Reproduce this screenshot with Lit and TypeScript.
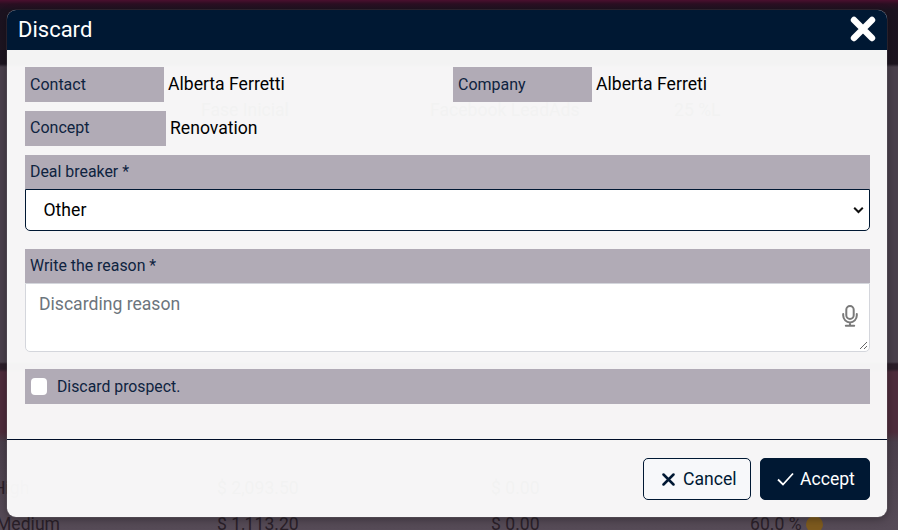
import { LitElement, html, css } from "lit";
import { customElement } from "lit/decorators.js";

@customElement("app-root")
export class AppRoot extends LitElement {
  static styles = css`
    :host {
      display: block;
      position: relative;
      width: 898px;
      height: 530px;
      overflow: hidden;
      font-family: Roboto, "Liberation Sans", sans-serif;
      background: #4d424e;
    }
    * { box-sizing: border-box; }
    .backdrop {
      position: absolute;
      inset: 0;
      background: linear-gradient(#4a0f2e 0, #2a0f22 4px, #1c1320 10px, #1d1520 64px, #4a404c 67px, #4a404c 362px, #2c1e2a 364px, #2c1e2a 369px, #4e2c3c 372px, #4e2c3c 432px, #4a3f4b 442px, #564b57 100%);
    }
    .ghost {
      position: absolute;
      font-size: 17.6px;
      color: #2a2029;
      white-space: nowrap;
    }
    .ghost.behind { color: #000; }
    .dot {
      position: absolute;
      left: 806px;
      top: 516px;
      width: 17px;
      height: 17px;
      border-radius: 50%;
      background: #7d5a1e;
    }
    .modal {
      position: absolute;
      left: 7px;
      top: 10px;
      width: 880px;
      height: 507px;
      border-radius: 9px;
      overflow: hidden;
      background: rgba(255, 255, 255, 0.95);
      display: flex;
      flex-direction: column;
      box-shadow: 0 0 0 0.5px rgba(255, 255, 255, 0.15), 0 2px 8px rgba(0, 0, 0, 0.35);
    }
    .header {
      height: 40px;
      flex: none;
      background: #001833;
      color: #fff;
      display: flex;
      align-items: center;
      justify-content: space-between;
      padding: 0 0 0 11px;
    }
    .title { font-size: 22px; line-height: 40px; }
    .close {
      width: 26px;
      height: 26px;
      margin-right: 11px;
      margin-top: -2px;
      display: block;
    }
    .body {
      height: 390px;
      flex: none;
      padding: 17px 17px 0 18px;
      display: flex;
      flex-direction: column;
      border-bottom: 1px solid #000d28;
    }
    .info { display: flex; height: 35px; margin-bottom: 9px; }
    .pair { display: flex; }
    .pair.first { width: 428px; }
    .tag {
      background: #b1abb6;
      color: #0e2340;
      font-size: 16px;
      line-height: 35px;
      padding-left: 5px;
      width: 139px;
      height: 35px;
    }
    .tag.wide { width: 141px; line-height: 34px; }
    .val { color: #000; font-size: 17.6px; line-height: 34px; padding-left: 4px; white-space: nowrap; }
    .bar {
      background: #b1abb6;
      color: #0e2340;
      font-size: 15.9px;
      height: 34px;
      line-height: 34px;
      padding-left: 5px;
    }
    .select {
      height: 42px;
      background: #fff;
      border: 1px solid #001833;
      border-radius: 0 0 5px 5px;
      display: flex;
      align-items: center;
      justify-content: space-between;
      padding: 0 5px 0 17.5px;
      font-size: 17.6px;
      color: #000;
      margin-bottom: 18px;
    }
    .chev { width: 11px; height: 8px; display: block; }
    .area {
      position: relative;
      height: 69px;
      background: #fff;
      border: 1px solid #d4d6dc;
      border-radius: 0 0 5px 5px;
      padding: 10px 13px;
      font-size: 17.6px;
      color: #6c757d;
      margin-bottom: 17px;
    }
    .mic { position: absolute; right: 10px; top: 21px; width: 18px; height: 22px; }
    .grip { position: absolute; right: 1px; bottom: 1px; width: 9px; height: 9px; }
    .check {
      background: #b1abb6;
      height: 35px;
      display: flex;
      align-items: center;
      padding-left: 6px;
      color: #0e2340;
      font-size: 15.8px;
    }
    .box {
      width: 16px;
      height: 17px;
      background: #fff;
      border-radius: 4px;
      margin-right: 10px;
      margin-top: -1px;
    }
    .footer {
      flex: 1;
      display: flex;
      justify-content: flex-end;
      align-items: flex-start;
      gap: 9px;
      padding: 18px 17px 0 0;
    }
    .btn {
      height: 42px;
      border-radius: 5px;
      display: flex;
      align-items: center;
      font-size: 17.6px;
      font-family: inherit;
      padding: 0;
    }
    .cancel {
      width: 108px;
      background: #f7f8fa;
      border: 1px solid #001833;
      color: #001833;
      padding-left: 18px;
      gap: 8px;
    }
    .accept {
      width: 110px;
      background: #001833;
      border: 1px solid #001833;
      color: #fff;
      padding-left: 16px;
      gap: 6px;
    }
    .ico { display: block; flex: none; }
  `;

  render() {
    return html`
      <div class="backdrop"></div>
      <div class="ghost behind" style="left:201px;top:100px">Fase Inicial</div>
      <div class="ghost behind" style="left:430px;top:100px">Facebook LeadAds</div>
      <div class="ghost behind" style="left:674px;top:100px">25 %L</div>
      <div class="ghost" style="left:-7px;top:478px">High</div>
      <div class="ghost behind" style="left:217px;top:478px">$ 2,093.50</div>
      <div class="ghost behind" style="left:491px;top:478px">$ 0.00</div>
      <div class="ghost" style="left:-4px;top:514px">Medium</div>
      <div class="ghost" style="left:217px;top:514px">$ 1,113.20</div>
      <div class="ghost" style="left:491px;top:514px">$ 0.00</div>
      <div class="ghost" style="left:750px;top:514px">60.0 %</div>
      <div class="dot"></div>
      <div class="modal">
        <div class="header">
          <span class="title">Discard</span>
          <svg class="close" viewBox="0 0 26 26">
            <path d="M4 4 22 22M22 4 4 22" stroke="#fff" stroke-width="6.4" stroke-linecap="round" fill="none"></path>
          </svg>
        </div>
        <div class="body">
          <div class="info">
            <div class="pair first"><div class="tag">Contact</div><div class="val">Alberta Ferretti</div></div>
            <div class="pair"><div class="tag">Company</div><div class="val">Alberta Ferreti</div></div>
          </div>
          <div class="info">
            <div class="pair"><div class="tag wide">Concept</div><div class="val">Renovation</div></div>
          </div>
          <div class="bar">Deal breaker *</div>
          <div class="select">
            <span>Other</span>
            <svg class="chev" viewBox="0 0 11 8"><path d="M1.2 1.8 5.5 6 9.8 1.8" stroke="#111" stroke-width="2" fill="none"></path></svg>
          </div>
          <div class="bar">Write the reason *</div>
          <div class="area">
            Discarding reason
            <svg class="mic" viewBox="0 0 18 22" fill="none" stroke="#7a7a7a" stroke-width="2">
              <rect x="5.3" y="1" width="7.4" height="13" rx="3.7"></rect>
              <path d="M2.2 9v1.6a6.8 6.8 0 0 0 13.6 0V9M9 17.5V20.5M4.8 20.8h8.4" stroke-linecap="round"></path>
            </svg>
            <svg class="grip" viewBox="0 0 9 9"><path d="M1 8 8 1M5 8 8 5" stroke="#555" stroke-width="0.9"></path></svg>
          </div>
          <div class="check"><span class="box"></span>Discard prospect.</div>
        </div>
        <div class="footer">
          <button class="btn cancel">
            <svg class="ico" width="13" height="13" viewBox="0 0 13 13"><path d="M1.5 1.5 11.5 11.5M11.5 1.5 1.5 11.5" stroke="#001833" stroke-width="2.5" stroke-linecap="round"></path></svg>
            Cancel
          </button>
          <button class="btn accept">
            <svg class="ico" width="17" height="14" viewBox="0 0 17 14"><path d="M1 7.5 6 12.5 16 1.5" stroke="#fff" stroke-width="1.8" fill="none"></path></svg>
            Accept
          </button>
        </div>
      </div>
    `;
  }
}
